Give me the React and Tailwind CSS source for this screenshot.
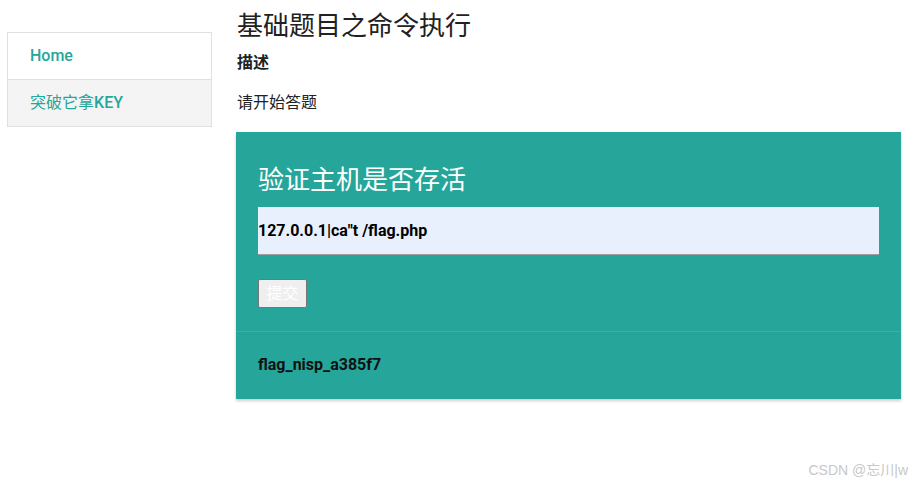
export default function App() {
  return (
    <div className="relative min-h-[487px] w-[911px] bg-white text-[#212121]" style={{ fontFamily: 'Roboto, "Noto Sans CJK SC", sans-serif' }}>
      <div className="flex gap-[24px] pl-[7px]">
        {/* Sidebar */}
        <div className="mt-[32px] w-[205px] self-start border border-[#e0e0e0]">
          <div className="flex h-[47px] items-center border-b border-[#e0e0e0] bg-white pl-[22px] text-[16px] font-medium text-[#26a69a]">
            Home
          </div>
          <div className="flex h-[46px] items-center bg-[#f4f4f4] pl-[22px] text-[16px] text-[#26a69a]">
            突破它拿<span className="font-medium">KEY</span>
          </div>
        </div>

        {/* Main */}
        <div className="w-[665px]">
          <h1 className="mt-[8px] pl-[1px] text-[26px] leading-[36px] font-normal">基础题目之命令执行</h1>
          <h4 className="mt-[9px] pl-[1px] text-[16px] leading-[20px] font-bold">描述</h4>
          <p className="mt-[20px] pl-[1px] text-[16px] leading-[20px]">请开始答题</p>

          <div className="mt-[19px] bg-[#26a69a] shadow-[0_2px_3px_rgba(0,0,0,0.2)]">
            <div className="px-[22px] pt-[30px] pb-[23px]">
              <div className="text-[26px] leading-[36px] text-white">验证主机是否存活</div>
              <div className="mt-[9px] flex h-[48px] items-center border-b border-[#9e9e9e] bg-[#e8f0fe] text-[16px] font-bold text-black">
                127.0.0.1|ca"t /flag.php
              </div>
              <button className="mt-[24px] flex h-[29px] w-[49px] items-center justify-center rounded-[2px] border border-[#767676] bg-[#efefef] text-[16px] text-white">
                提交
              </button>
            </div>
            <div className="border-t border-[#4aa79e] px-[22px] pt-[23px] pb-[24px] text-[16px] leading-[20px] font-bold text-[#111]">
              flag_nisp_a385f7
            </div>
          </div>
        </div>
      </div>

      <div className="absolute right-[3px] bottom-[6px] text-[14px] leading-[21px] text-[#c8c8c8]" style={{ fontFamily: '"Liberation Sans", "Noto Sans CJK SC", sans-serif' }}>
        CSDN @忘川|w
      </div>
    </div>
  );
}
